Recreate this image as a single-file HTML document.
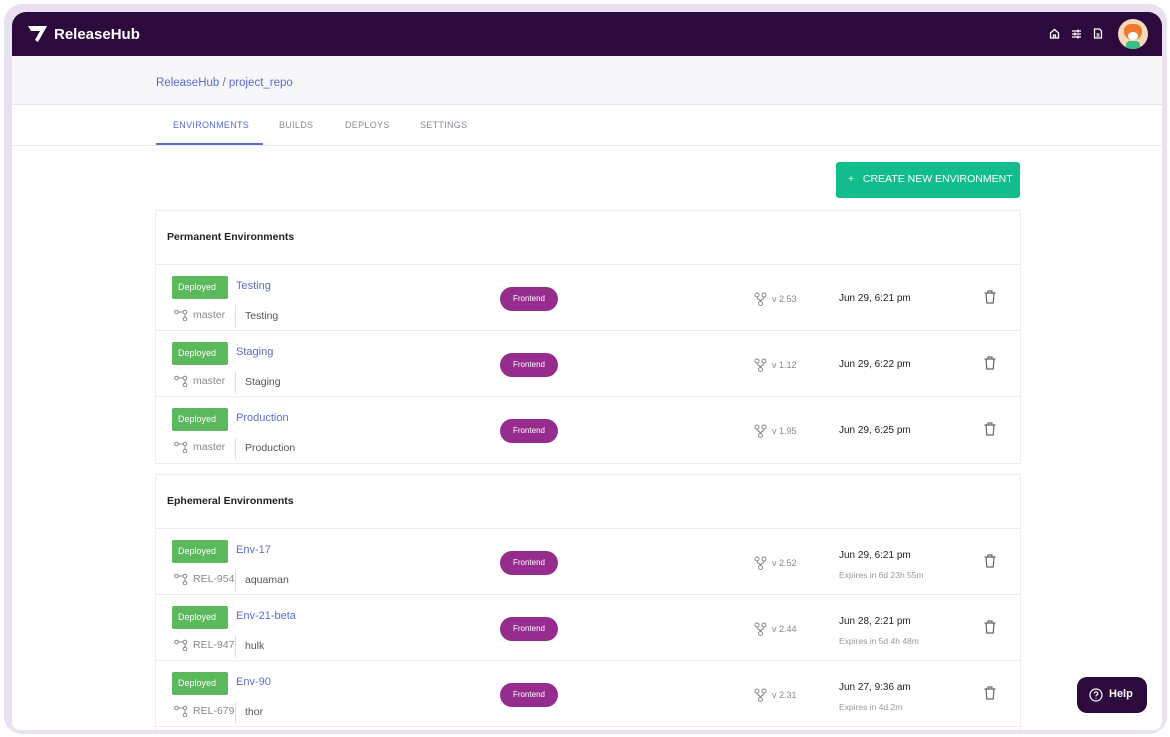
<!DOCTYPE html>
<html><head><style>
*{margin:0;padding:0;box-sizing:border-box}
html,body{width:1170px;height:737px;overflow:hidden}
body{background:#fff;font-family:"Liberation Sans",Arial,sans-serif;position:relative}
.frame{position:absolute;left:4px;top:4px;width:1163px;height:730px;border-radius:18px;background:#e9e1ef}
.app{position:absolute;left:12px;top:12px;width:1150px;height:718px;border-radius:14px 14px 8px 8px;background:#fff;overflow:hidden}
.top{height:44px;background:#2c0a3d;position:relative}
.logo{position:absolute;left:16px;top:13px;color:#fff;font-weight:bold;font-size:15px;display:flex;align-items:center;gap:6px}
.crumb{height:49px;background:#f7f7f9;border-bottom:1px solid #e6e6ea;padding:21px 0 0 144px;color:#5b6bd1;font-size:11.5px}
.tabs{height:41px;border-bottom:1px solid #ececf0;position:relative}
.tab{position:absolute;top:15px;font-size:9px;color:#8a8a94;letter-spacing:.3px}
.btn{position:absolute;left:824px;top:150px;width:184px;height:36px;background:#13bc8c;border-radius:3px;color:#fff;font-size:10.5px;padding:11px 0 0 12px}
.card{position:absolute;left:143px;width:866px;border:1px solid #eeeef2;background:#fff}
.ch{height:54px;padding:20px 0 0 11px;font-size:10.5px;font-weight:bold;color:#222;border-bottom:1px solid #ececf0}
.row{height:66px;border-bottom:1px solid #ececf0;position:relative}
.dep{position:absolute;left:16px;top:11px;width:56px;height:23px;background:#5cb85c;color:#fff;font-size:9px;border-radius:2px;padding:6px 0 0 6px}
.nm{position:absolute;left:80px;top:15px;color:#5b6bd1;font-size:11px}
.br{position:absolute;left:18px;top:44px;font-size:10.5px;color:#888;display:flex;align-items:center;gap:4px}
.sep{position:absolute;left:79px;top:41px;height:21px;border-left:1px solid #ddd}
.sub{position:absolute;left:89px;top:45px;font-size:10.5px;color:#555}
.fe{position:absolute;left:344px;top:22px;width:58px;height:24px;border-radius:12px;background:#962d8e;color:#fff;font-size:8px;text-align:center;line-height:24px}
.ver{position:absolute;left:598px;top:27px;font-size:9px;color:#888;display:flex;align-items:center;gap:5px}
.dt{position:absolute;left:683px;top:28px;font-size:10px;color:#222}
.dt2{top:21px}
.ex{position:absolute;left:683px;top:41px;font-size:8.5px;color:#999}
.tr{position:absolute;left:828px;top:25px}
.help{position:absolute;left:1077px;top:677px;width:70px;height:36px;border-radius:10px;background:#2c0a3d;color:#fff;font-weight:bold;font-size:11px;padding:11px 0 0 12px;display:flex;gap:6px}
</style></head><body>
<div class="frame"></div>
<div class="app">
<div class="top">
<div class="logo"><svg width="20" height="18" viewBox="0 0 20 18"><path d="M0 1h19l-9 16-3-2 5-9H3z" fill="#fff"/></svg>ReleaseHub</div>
<svg style="position:absolute;left:1037px;top:16px" width="11" height="11" viewBox="0 0 11 11" fill="none" stroke="#fff" stroke-width="1.3"><path d="M1.5 5L5.5 1.5 9.5 5V10h-8z M4.5 10V7h2v3"/></svg>
<svg style="position:absolute;left:1059px;top:16px" width="11" height="11" viewBox="0 0 11 11" stroke="#fff" stroke-width="1.3"><path d="M1 3h9M1 6h9M1 9h9M7 1.5v3M4 4.5v3M7 7.5v3"/></svg>
<svg style="position:absolute;left:1081px;top:16px" width="10" height="11" viewBox="0 0 10 11" fill="none" stroke="#fff" stroke-width="1.3"><path d="M1.5 1h5l2 2v7h-7z M3.5 6h3M3.5 8h3"/></svg>
<div style="position:absolute;left:1106px;top:7px;width:30px;height:30px;border-radius:50%;background:#f6d9b8;overflow:hidden"><div style="position:absolute;left:6px;top:5px;width:18px;height:16px;background:#ee7a2c;border-radius:40% 40% 50% 50%"></div><div style="position:absolute;left:10px;top:13px;width:10px;height:8px;background:#fff;border-radius:50%"></div><div style="position:absolute;left:8px;top:22px;width:14px;height:8px;background:#3bbf8a;border-radius:4px 4px 0 0"></div></div>
</div>
<div class="crumb">ReleaseHub / project_repo</div>
<div class="tabs">
<div class="tab" style="left:161px;color:#5b6bd1">ENVIRONMENTS</div>
<div style="position:absolute;left:144px;top:38px;width:107px;height:2px;background:#5b6bd1"></div>
<div class="tab" style="left:267px">BUILDS</div>
<div class="tab" style="left:333px">DEPLOYS</div>
<div class="tab" style="left:408px">SETTINGS</div>
</div>
<div class="btn">+&nbsp;&nbsp;&nbsp;CREATE NEW ENVIRONMENT</div>

<div class="card" style="top:198px">
<div class="ch">Permanent Environments</div>
<div class="row"><div class="dep">Deployed</div><div class="nm">Testing</div><div class="br">BRICON master</div><div class="sep"></div><div class="sub">Testing</div><div class="fe">Frontend</div><div class="ver">VICON v 2.53</div><div class="dt">Jun 29, 6:21 pm</div><div class="tr">TRASH</div></div>
<div class="row"><div class="dep">Deployed</div><div class="nm">Staging</div><div class="br">BRICON master</div><div class="sep"></div><div class="sub">Staging</div><div class="fe">Frontend</div><div class="ver">VICON v 1.12</div><div class="dt">Jun 29, 6:22 pm</div><div class="tr">TRASH</div></div>
<div class="row" style="border-bottom:0"><div class="dep">Deployed</div><div class="nm">Production</div><div class="br">BRICON master</div><div class="sep"></div><div class="sub">Production</div><div class="fe">Frontend</div><div class="ver">VICON v 1.95</div><div class="dt">Jun 29, 6:25 pm</div><div class="tr">TRASH</div></div>
</div>

<div class="card" style="top:462px;height:260px">
<div class="ch">Ephemeral Environments</div>
<div class="row"><div class="dep">Deployed</div><div class="nm">Env-17</div><div class="br">BRICON REL-954</div><div class="sep"></div><div class="sub">aquaman</div><div class="fe">Frontend</div><div class="ver">VICON v 2.52</div><div class="dt dt2">Jun 29, 6:21 pm</div><div class="ex">Expires in 6d 23h 55m</div><div class="tr">TRASH</div></div>
<div class="row"><div class="dep">Deployed</div><div class="nm">Env-21-beta</div><div class="br">BRICON REL-947</div><div class="sep"></div><div class="sub">hulk</div><div class="fe">Frontend</div><div class="ver">VICON v 2.44</div><div class="dt dt2">Jun 28, 2:21 pm</div><div class="ex">Expires in 5d 4h 48m</div><div class="tr">TRASH</div></div>
<div class="row"><div class="dep">Deployed</div><div class="nm">Env-90</div><div class="br">BRICON REL-679</div><div class="sep"></div><div class="sub">thor</div><div class="fe">Frontend</div><div class="ver">VICON v 2.31</div><div class="dt dt2">Jun 27, 9:36 am</div><div class="ex">Expires in 4d 2m</div><div class="tr">TRASH</div></div>
</div>
</div>
<div class="help"><svg width="14" height="14" viewBox="0 0 14 14" fill="none" stroke="#fff" stroke-width="1.2"><circle cx="7" cy="7" r="6"/><path d="M5.3 5.5a1.7 1.7 0 1 1 2.3 1.6c-.5.2-.6.5-.6 1v.4M7 10v.6"/></svg>Help</div>
<script>
var br='<svg width="15" height="12" viewBox="0 0 15 12" fill="none" stroke="#888" stroke-width="1"><circle cx="2.5" cy="3" r="1.8"/><circle cx="11" cy="3" r="1.8"/><circle cx="11" cy="10" r="1.8"/><path d="M4.3 3h4.9M11 4.8v3.4"/></svg>';
var vi='<svg width="13" height="14" viewBox="0 0 13 14" fill="none" stroke="#888" stroke-width="1"><circle cx="3" cy="3" r="2"/><circle cx="10" cy="3" r="2"/><circle cx="6.5" cy="11.5" r="2"/><path d="M3 5c0 3 3.5 2 3.5 4.5M10 5c0 3-3.5 2-3.5 4.5"/></svg>';
var tr='<svg width="12" height="14" viewBox="0 0 12 14" fill="none" stroke="#666" stroke-width="1.2"><path d="M0.5 3h11M4 3V1h4v2M2 3l.8 10h6.4L10 3"/></svg>';
document.querySelectorAll('.br').forEach(e=>e.innerHTML=e.innerHTML.replace('BRICON',br));
document.querySelectorAll('.ver').forEach(e=>e.innerHTML=e.innerHTML.replace('VICON',vi));
document.querySelectorAll('.tr').forEach(e=>e.innerHTML=tr);
</script>
</body></html>
